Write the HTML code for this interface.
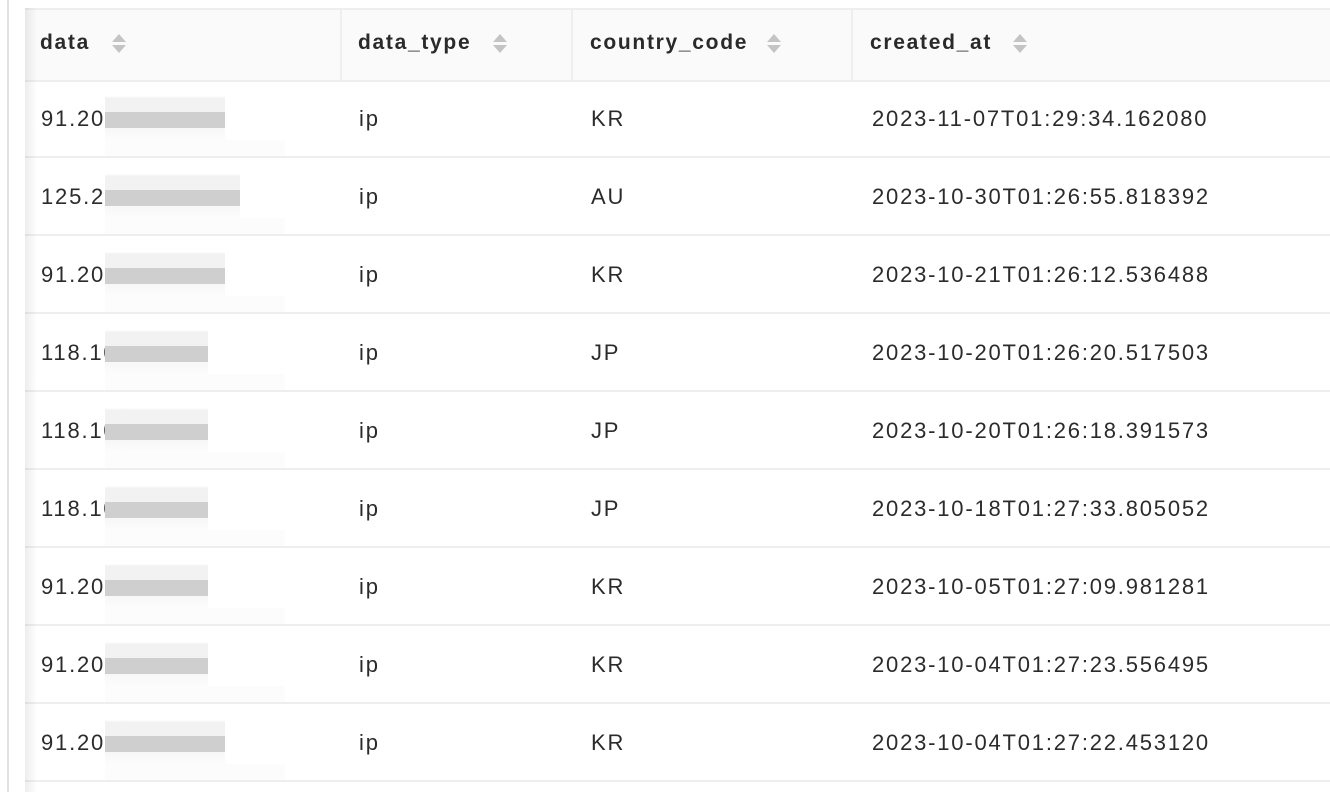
<!DOCTYPE html>
<html><head><meta charset="utf-8"><style>
body{margin:0;width:1330px;height:792px;background:#fff;overflow:hidden;position:relative;font-family:"Liberation Sans",sans-serif;color:#2b2b2b}
.vl{position:absolute;left:7px;top:0;width:2px;height:792px;background:#e2e2e2}
.tbl{position:absolute;left:25px;top:8px;width:1310px;height:784px;border-top:2px solid #eee}
.sh{position:absolute;left:25px;top:8px;width:12px;height:784px;background:linear-gradient(to right,rgba(0,0,0,.07),rgba(0,0,0,0))}
.hd{position:absolute;left:0;top:0;width:100%;height:70px;background:#fafafa;border-bottom:2px solid #eee}
.sep{position:absolute;top:0;height:70px;width:2px;background:#eee}
.ht{position:absolute;top:21px;font-size:21px;font-weight:bold;color:#2a2a2a;letter-spacing:1.7px}
.si{position:absolute;top:24px;width:14px;height:22px}
.row{position:absolute;left:0;width:100%;height:76px;border-bottom:2px solid #eee}
.c{position:absolute;top:26px;font-size:22px;color:#2b2b2b;letter-spacing:1.8px}
.bl{position:absolute;top:16px;height:44px;width:180px}
</style></head><body>
<div class="vl"></div>
<div class="tbl">
<div class="hd">
<div class="sep" style="left:315px"></div><div class="sep" style="left:546px"></div><div class="sep" style="left:826px"></div>
<div class="ht" style="left:15px">data</div>
<div class="ht" style="left:333px">data_type</div>
<div class="ht" style="left:565px">country_code</div>
<div class="ht" style="left:845px">created_at</div>
</div>
</div>
<div class="sh"></div>
<script>
var t=document.querySelector('.tbl');
[87,468,742,988].forEach(function(x){t.insertAdjacentHTML('beforeend','<svg class="si" style="left:'+x+'px" viewBox="0 0 14 22"><path d="M7 0L14 8H0Z" fill="#c4c4c4"/><path d="M0 11H14L7 19Z" fill="#c4c4c4"/></svg>')});
var d=[["91.20","KR","2023-11-07T01:29:34.162080",120],["125.2","AU","2023-10-30T01:26:55.818392",135],["91.20","KR","2023-10-21T01:26:12.536488",120],["118.10","JP","2023-10-20T01:26:20.517503",103],["118.10","JP","2023-10-20T01:26:18.391573",103],["118.10","JP","2023-10-18T01:27:33.805052",103],["91.20","KR","2023-10-05T01:27:09.981281",103],["91.20","KR","2023-10-04T01:27:23.556495",103],["91.20","KR","2023-10-04T01:27:22.453120",120]];
d.forEach(function(r,i){var top=70+78*i;
t.insertAdjacentHTML('beforeend','<div class="row" style="top:'+top+'px"><div class="c" style="left:16px">'+r[0]+'</div>'+
'<div class="bl" style="left:80px;background:linear-gradient(#fff 0,#f2f2f2 2px,#f2f2f2 16px,#cfcfcf 16px,#cfcfcf 32px,#f7f7f7 32px,#fcfcfc 44px)"><div style="position:absolute;left:'+r[3]+'px;top:0;width:'+(180-r[3])+'px;height:44px;background:#fff"></div><div style="position:absolute;left:0;top:44px;width:180px;height:16px;background:#fcfcfc"></div></div>'+
'<div class="c" style="left:334px">ip</div><div class="c" style="left:566px">'+r[1]+'</div><div class="c" style="left:847px">'+r[2]+'</div></div>')});
</script>
</body></html>
